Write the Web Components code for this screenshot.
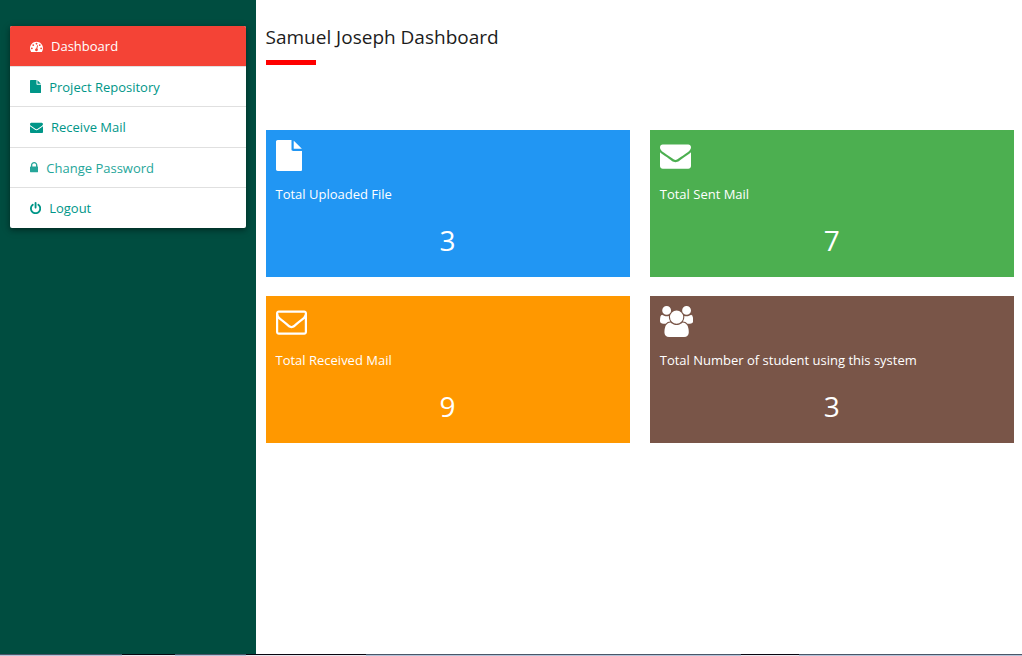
<!DOCTYPE html>
<html lang="en">
<head>
<meta charset="utf-8">
<meta name="viewport" content="width=device-width, initial-scale=1">
<title>Samuel Joseph Dashboard</title>
<style>
  body { margin: 0; font-family: "Open Sans", "Noto Sans", sans-serif; font-size: 13px; color: #1c1c1c; background: #fff; }
</style>
</head>
<body>
<dash-app>
  <side-menu slot="side">
    <menu-entry icon="gauge" active>Dashboard</menu-entry>
    <menu-entry icon="file">Project Repository</menu-entry>
    <menu-entry icon="mail">Receive Mail</menu-entry>
    <menu-entry icon="lock" hovered>Change Password</menu-entry>
    <menu-entry icon="power">Logout</menu-entry>
  </side-menu>
  <page-title>Samuel Joseph Dashboard</page-title>
  <card-grid>
    <stat-card icon="file" value="3" style="--card:#2196f3">Total Uploaded File</stat-card>
    <stat-card icon="mail" value="7" style="--card:#4caf50">Total Sent Mail</stat-card>
    <stat-card icon="mail-open" value="9" style="--card:#ff9800">Total Received Mail</stat-card>
    <stat-card icon="users" value="3" style="--card:#795548">Total Number of student using this system</stat-card>
  </card-grid>
  <task-strip slot="foot"></task-strip>
</dash-app>

<script>
const ICONS = {
  gauge: [1792, "M384 1152q0-53-37.5-90.5t-90.5-37.5-90.5 37.5-37.5 90.5 37.5 90.5 90.5 37.5 90.5-37.5 37.5-90.5zm192-448q0-53-37.5-90.5t-90.5-37.5-90.5 37.5-37.5 90.5 37.5 90.5 90.5 37.5 90.5-37.5 37.5-90.5zm428 481l101-382q6-26-7.5-48.5t-38.5-29.5-48 6.5-30 39.5l-101 382q-60 5-107 43.5t-63 98.5q-20 77 20 146t117 89 146-20 89-117q16-60-6-117t-72-91zm660-33q0-53-37.5-90.5t-90.5-37.5-90.5 37.5-37.5 90.5 37.5 90.5 90.5 37.5 90.5-37.5 37.5-90.5zm-640-640q0-53-37.5-90.5t-90.5-37.5-90.5 37.5-37.5 90.5 37.5 90.5 90.5 37.5 90.5-37.5 37.5-90.5zm448 192q0-53-37.5-90.5t-90.5-37.5-90.5 37.5-37.5 90.5 37.5 90.5 90.5 37.5 90.5-37.5 37.5-90.5zm320 448q0 261-141 483-19 29-54 29h-1402q-35 0-54-29-141-221-141-483 0-182 71-348t191-286 286-191 348-71 348 71 286 191 191 286 71 348z"],
  file: [1536, "M1024 512v-472q22 14 36 28l408 408q14 14 28 36h-472zm-128 32q0 40 28 68t68 28h544v1056q0 40-28 68t-68 28h-1344q-40 0-68-28t-28-68v-1600q0-40 28-68t68-28h800v544z"],
  mail: [1792, "M1792 710v794q0 66-47 113t-113 47h-1472q-66 0-113-47t-47-113v-794q44 49 101 87 362 246 497 345 57 42 92.5 65.5t94.5 48 110 24.5h2q51 0 110-24.5t94.5-48 92.5-65.5q170-123 498-345 57-39 100-87zm0-294q0 79-49 151t-122 123q-376 261-468 325-10 7-42.5 31t-54 38.5-52 32.5-57.5 27-50 9h-2q-23 0-50-9t-57.5-27-52-32.5-54-38.5-42.5-31q-91-64-262-182.5t-205-142.5q-62-42-117-115.5t-55-136.5q0-78 41.5-130t118.5-52h1472q65 0 112.5 47t47.5 113z"],
  "mail-open": [1792, "M1664 1504v-768q-32 36-69 66-268 206-426 338-51 43-83 67t-86.5 48.5-102.5 24.5h-2q-48 0-102.5-24.5t-86.5-48.5-83-67q-158-132-426-338-37-30-69-66v768q0 13 9.5 22.5t22.5 9.5h1472q13 0 22.5-9.5t9.5-22.5zm0-1051v-24.5l-.5-13-3-12.5-5.5-9-9-7.5-14-2.5h-1472q-13 0-22.5 9.5t-9.5 22.5q0 168 147 284 193 152 401 317 6 5 35 29.5t46 37.5 44.5 31.5 50.5 27.5 43 9h2q20 0 43-9t50.5-27.5 44.5-31.5 46-37.5 35-29.5q208-165 401-317 54-43 100.5-115.5t46.5-131.5zm128-37v1088q0 66-47 113t-113 47h-1472q-66 0-113-47t-47-113v-1088q0-66 47-113t113-47h1472q66 0 113 47t47 113z"],
  users: [1920, "M593 896q-162 5-265 128h-134q-82 0-138-40.5t-56-118.5q0-353 124-353 6 0 43.5 21t97.5 42.5 119 21.5q67 0 133-23-5 37-5 66 0 139 81 256zm1071 637q0 120-73 189.5t-194 69.5h-874q-121 0-194-69.5t-73-189.5q0-53 3.5-103.5t14-109 26.5-108.5 43-97.5 62-81 85.5-53.5 111.5-20q10 0 43 21.5t73 48 107 48 135 21.5 135-21.5 107-48 73-48 43-21.5q61 0 111.5 20t85.5 53.5 62 81 43 97.5 26.5 108.5 14 109 3.5 103.5zm-1024-1277q0 106-75 181t-181 75-181-75-75-181 75-181 181-75 181 75 75 181zm704 384q0 159-112.5 271.5t-271.5 112.5-271.5-112.5-112.5-271.5 112.5-271.5 271.5-112.5 271.5 112.5 112.5 271.5zm576 225q0 78-56 118.5t-138 40.5h-134q-103-123-265-128 81-117 81-256 0-29-5-66 66 23 133 23 59 0 119-21.5t97.5-42.5 43.5-21q124 0 124 353zm-128-609q0 106-75 181t-181 75-181-75-75-181 75-181 181-75 181 75 75 181z"],
  lock: [1152, "M320 768h512v-192q0-106-75-181t-181-75-181 75-75 181v192zm832 96v576q0 40-28 68t-68 28h-960q-40 0-68-28t-28-68v-576q0-40 28-68t68-28h32v-192q0-184 132-316t316-132 316 132 132 316v192h32q40 0 68 28t28 68z"],
  power: [1536, "M1536 896q0 156-61 298t-164 245-245 164-298 61-298-61-245-164-164-245-61-298q0-182 80.5-343t226.5-270q43-32 95.5-25t83.5 50q32 42 24.5 94.5t-49.5 84.5q-98 74-151.5 181t-53.5 228q0 104 40.5 198.5t109.5 163.5 163.5 109.5 198.5 40.5 198.5-40.5 163.5-109.5 109.5-163.5 40.5-198.5q0-121-53.5-228t-151.5-181q-42-32-49.5-84.5t24.5-94.5q31-43 84-50t95 25q146 109 226.5 270t80.5 343zm-640-768v640q0 52-38 90t-90 38-90-38-38-90v-640q0-52 38-90t90-38 90 38 38 90z"]
};
const icon = name => `<svg viewBox="0 0 ${ICONS[name][0]} 1792" fill="currentColor" aria-hidden="true"><path d="${ICONS[name][1]}"/></svg>`;

function define(tag, render) {
  customElements.define(tag, class extends HTMLElement {
    connectedCallback() {
      if (this.shadowRoot) return;
      const t = document.createElement("template");
      t.innerHTML = render(this);
      this.attachShadow({ mode: "open" }).append(t.content);
    }
  });
}

define("dash-app", () => `
  <style>
    :host { display: grid; grid-template-columns: 1fr 3fr; grid-template-rows: 1fr auto; min-height: 100vh; }
    aside { background: #004d40; padding: 26px 10px; }
    main { padding: 24px 8px 24px 10px; }
    footer { grid-column: 1 / -1; }
  </style>
  <aside><slot name="side"></slot></aside>
  <main><slot></slot></main>
  <footer><slot name="foot"></slot></footer>`);

define("side-menu", () => `
  <style>
    :host { display: block; }
    nav { display: flex; flex-direction: column; background: #fff; border-radius: 2px; overflow: hidden;
      box-shadow: 0 2px 5px rgba(0,0,0,.3), 0 2px 10px rgba(0,0,0,.2); }
  </style>
  <nav aria-label="Main"><slot></slot></nav>`);

define("menu-entry", el => `
  <style>
    :host { display: block; color: #009688; border-bottom: 1px solid #e0e0e0; }
    :host(:nth-child(even)) { --row: 39px; }
    :host(:last-child) { border-bottom: 0; }
    :host([active]) { color: #fff; background: #f44336; background-clip: padding-box; }
    :host([hovered]) { color: #26a69a; }
    a { display: flex; align-items: center; gap: 8px; padding: 0 20px; min-height: var(--row, 40px); color: inherit; text-decoration: none; line-height: 20px; }
    svg { height: 13px; flex: none; }
  </style>
  <a href="#">${icon(el.getAttribute("icon"))}<span><slot></slot></span></a>`);

define("page-title", () => `
  <style>
    :host { display: block; }
    h1 { margin: 0; font-size: 19px; line-height: 26px; font-weight: 400; }
    h1::after { content: ""; display: block; width: 50px; height: 5px; margin-top: 10px; background: #f00; }
  </style>
  <h1><slot></slot></h1>`);

define("card-grid", () => `
  <style>
    :host { display: grid; grid-template-columns: 1fr 1fr; gap: 19px 20px; margin-top: 65px; }
  </style>
  <slot></slot>`);

define("stat-card", el => `
  <style>
    :host { display: block; padding: 10px 10px 17px; background: var(--card); color: #fff; }
    svg { display: block; height: 31px; }
    h2 { margin: 13px 0 0; font-size: 13px; line-height: 20px; font-weight: 400; }
    p { margin: 16px 0 0; font-size: 28px; line-height: 40px; text-align: center; }
  </style>
  ${icon(el.getAttribute("icon"))}
  <h2><slot></slot></h2>
  <p>${el.getAttribute("value")}</p>`);

define("task-strip", () => `
  <style>
    :host { display: flex; height: 2px; background: linear-gradient(#4b5668 50%, #b4c3d9 50%); }
    i { background: linear-gradient(#0b0510 50%, #e8e6ee 50%); flex: 53; }
    b { flex: 122; }
  </style>
  <b></b><i></i><b style="flex:71"></b><i style="flex:120"></i><b style="flex:375"></b><i style="flex:58"></i><b style="flex:223"></b>`);
</script>
</body>
</html>
